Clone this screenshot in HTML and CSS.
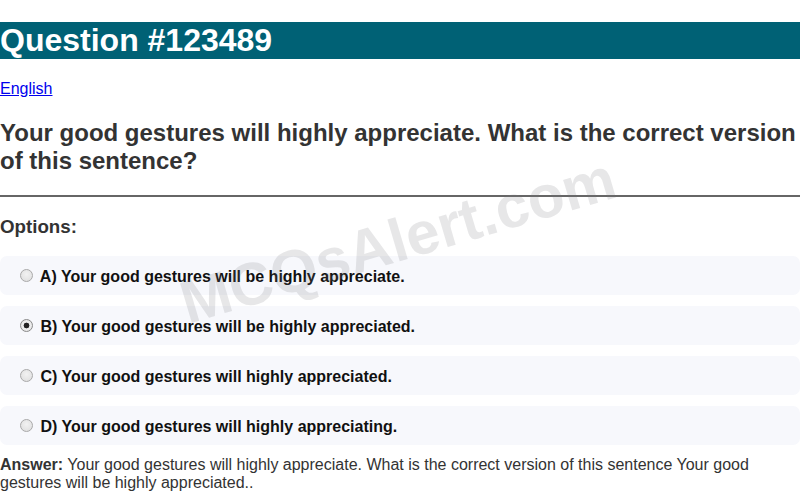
FILE: index.html
```html
<!DOCTYPE html>
<html lang="en">
<head>
<meta charset="utf-8">
<title>Question #123489</title>
<link rel="stylesheet" href="styles.css">
</head>
<body>
<div class="page">
  <h1 class="title">Question #123489</h1>
  <p class="category"><a href="#">English</a></p>
  <h2 class="question">Your good gestures will highly appreciate. What is the correct version of this sentence?</h2>
  <hr class="divider">
  <h3 class="options-title">Options:</h3>
  <div class="options">
    <label class="option"><input type="radio" name="q" class="radio"> A) Your good gestures will be highly appreciate.</label>
    <label class="option"><input type="radio" name="q" class="radio" checked> B) Your good gestures will be highly appreciated.</label>
    <label class="option"><input type="radio" name="q" class="radio"> C) Your good gestures will highly appreciated.</label>
    <label class="option"><input type="radio" name="q" class="radio"> D) Your good gestures will highly appreciating.</label>
  </div>
  <p class="answer"><strong>Answer:</strong> Your good gestures will highly appreciate. What is the correct version of this sentence Your good gestures will be highly appreciated..</p>
  <div class="watermark">MCQsAlert.com</div>
</div>
</body>
</html>
```

FILE: styles.css
```css
html, body {
  margin: 0;
  padding: 0;
  background: #ffffff;
}

body {
  font-family: "Liberation Sans", Arial, sans-serif;
  font-size: 16px;
  color: #333333;
}

.page {
  position: relative;
  overflow: hidden;
}

.title {
  margin: 22px 0 21.44px;
  font-size: 32px;
  font-weight: bold;
  color: #ffffff;
  background: #006175;
  line-height: 36.8px;
}

.category {
  margin: 16px 0;
}

.category a {
  color: #0000ee;
  text-decoration: underline;
}

.question {
  margin: 20.9px 0 19.92px;
  font-size: 24px;
  font-weight: bold;
  color: #333333;
  line-height: 28px;
}

.divider {
  margin: 0;
  border: none;
  border-top: 2px solid #666666;
  height: 0;
}

.options-title {
  margin: 19px 0 18px;
  font-size: 18.72px;
  font-weight: bold;
  color: #333333;
  line-height: 21.5px;
}

.options {
  display: flex;
  flex-direction: column;
  gap: 11px;
}

.option {
  display: flex;
  align-items: center;
  background: #f7f8fc;
  border-radius: 7px;
  padding: 12.3px 15px 8.3px;
  font-weight: bold;
  color: #111111;
  line-height: 18.4px;
  white-space: pre;
}

.radio {
  appearance: none;
  -webkit-appearance: none;
  width: 13px;
  height: 13px;
  margin: 0 3px 0 5px;
  border-radius: 50%;
  border: 1px solid #a9a9a9;
  background: radial-gradient(circle at 50% 40%, #f2f2f2 0%, #dcdcdc 100%);
  box-sizing: border-box;
  position: relative;
  top: -2px;
  flex: none;
}

.radio:checked {
  background: radial-gradient(circle, #222222 0 2.6px, #f0f0f0 3.2px, #dddddd 100%);
  border-color: #8a8a8a;
}

.answer {
  margin: 11px 0 0;
  line-height: 18.4px;
  color: #333333;
}

.watermark {
  position: absolute;
  left: 398px;
  top: 241px;
  transform: translate(-50%, -50%) rotate(-16.5deg);
  font-size: 60px;
  font-weight: bold;
  color: rgba(120, 120, 130, 0.18);
  white-space: nowrap;
  pointer-events: none;
  line-height: 1;
}
```
